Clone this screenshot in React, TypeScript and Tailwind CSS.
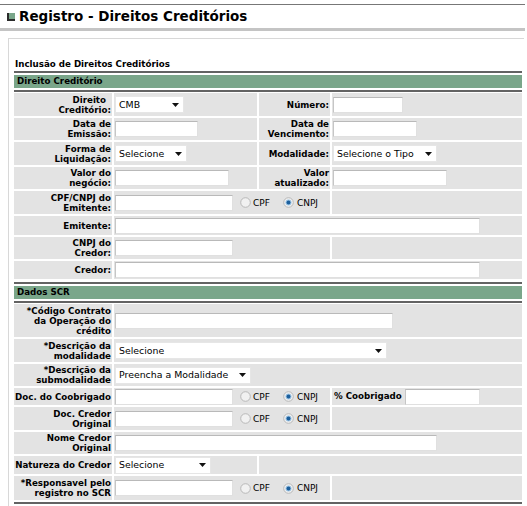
import type { ReactNode } from 'react';

const cell = 'bg-[#e3e3e3] flex items-center';

function Label({ lines, first }: { lines: string[]; first?: string }) {
  return (
    <div className={`${cell} justify-end pr-[1px] text-right text-[8.7px] font-bold leading-[10px]`}>
      <div>
        {lines.map((l, i) => (
          <div key={i} className={i === 0 && first ? first : ''}>
            {l}
          </div>
        ))}
      </div>
    </div>
  );
}

function Input({ w }: { w: string }) {
  return (
    <div
      className={`${w} h-[16px] shrink-0 border border-[#e0e0e0] border-t-[#b9b9b9] border-l-[#c6c6c6] bg-white`}
    />
  );
}

function Select({ w, text }: { w: string; text: string }) {
  return (
    <div
      className={`${w} flex h-[17px] shrink-0 items-center justify-between border border-[#e6e6e6] bg-white pl-[3px] pr-[4px] text-[9.4px] leading-[12px]`}
    >
      <span>{text}</span>
      <svg width="7" height="4" viewBox="0 0 7 4">
        <path d="M0 0H7L3.5 4Z" fill="#111" />
      </svg>
    </div>
  );
}

function Radio({ checked }: { checked?: boolean }) {
  return (
    <svg width="11" height="11" viewBox="0 0 11 11" className="shrink-0">
      <circle cx="5.5" cy="5.5" r="4.8" fill="#f1f1f1" stroke="#b8b8b8" strokeWidth="1" />
      {checked && <circle cx="5.5" cy="5.5" r="3" fill="#9cc3e3" />}
      {checked && <circle cx="5.5" cy="5.5" r="2" fill="#1c5f9c" />}
    </svg>
  );
}

function DocInput() {
  return (
    <div className="flex items-center text-[9px] leading-[12px]">
      <Input w="w-[118px]" />
      <div className="ml-[7px] flex items-center gap-[2px]">
        <Radio />
        <span>CPF</span>
      </div>
      <div className="ml-[13px] flex items-center gap-[3px]">
        <Radio checked />
        <span>CNPJ</span>
      </div>
    </div>
  );
}

function Field({ span, children }: { span?: string; children?: ReactNode }) {
  return <div className={`${cell} pl-[1px] ${span ?? ''}`}>{children}</div>;
}

function SectionHeader({ title, className }: { title: string; className?: string }) {
  return (
    <div className={className}>
      <div className="h-[2px] bg-[#636363]" />
      <div className="mt-[2px] h-[13px] bg-[#7aa68a] pl-[3px] text-[8.7px] font-bold leading-[13px]">
        {title}
      </div>
      <div className="mt-[2px] h-[2px] bg-[#636363]" />
    </div>
  );
}

export default function App() {
  return (
    <div className="h-[506px] w-[527px] overflow-hidden bg-white pt-[4px] font-['DejaVu_Sans',sans-serif] text-black">
      <div className="h-px w-[525px] bg-[#777]" />
      <div className="flex h-[23px] items-center gap-[4px] pl-[7px]">
        <span className="mt-[1px] h-[8px] w-[8px] border-b-2 border-l-2 border-[#2a2a2a] bg-[#7aa68a]" />
        <h1 className="text-[13.5px] font-bold leading-none">Registro - Direitos Creditórios</h1>
      </div>
      <div className="h-[3px] w-[525px] bg-[#c4c4c4]" />

      <div className="ml-[8px] mt-[7px] h-[500px] w-[516px] border-l border-t border-[#d8d8d8] pl-[5px] pr-[2px] pt-[20px]">
        <div className="pl-[1px] text-[8.7px] font-bold leading-[11px]">Inclusão de Direitos Creditórios</div>

        <SectionHeader title="Direito Creditório" className="mt-[1px]" />
        <div className="mt-[1px] grid grid-cols-[98px_143px_71px_190px] grid-rows-[23px_22px_23px_22px_23px_19px_22px_18px] gap-[2px]">
          <Label lines={['Direito', 'Creditório:']} first="pr-[5px]" />
          <Field>
            <Select w="w-[69px]" text="CMB" />
          </Field>
          <Label lines={['Número:']} />
          <Field>
            <Input w="w-[70px]" />
          </Field>

          <Label lines={['Data de', 'Emissão:']} />
          <Field>
            <Input w="w-[83px]" />
          </Field>
          <Label lines={['Data de', 'Vencimento:']} />
          <Field>
            <Input w="w-[84px]" />
          </Field>

          <Label lines={['Forma de', 'Liquidação:']} />
          <Field>
            <Select w="w-[72px]" text="Selecione" />
          </Field>
          <Label lines={['Modalidade:']} />
          <Field>
            <Select w="w-[104px]" text="Selecione o Tipo" />
          </Field>

          <Label lines={['Valor do', 'negócio:']} />
          <Field>
            <Input w="w-[114px]" />
          </Field>
          <Label lines={['Valor', 'atualizado:']} />
          <Field>
            <Input w="w-[114px]" />
          </Field>

          <Label lines={['CPF/CNPJ do', 'Emitente:']} />
          <Field span="col-span-2">
            <DocInput />
          </Field>
          <Field />

          <Label lines={['Emitente:']} />
          <Field span="col-span-3">
            <Input w="w-[365px]" />
          </Field>

          <Label lines={['CNPJ do', 'Credor:']} />
          <Field span="col-span-2">
            <Input w="w-[118px]" />
          </Field>
          <Field />

          <Label lines={['Credor:']} />
          <Field span="col-span-3">
            <Input w="w-[365px]" />
          </Field>
        </div>

        <SectionHeader title="Dados SCR" className="mt-[3px]" />
        <div className="mt-[1px] grid grid-cols-[98px_143px_71px_190px] grid-rows-[33px_23px_22px_17px_23px_22px_18px_24px] gap-[2px]">
          <Label lines={['*Código Contrato', 'da Operação do', 'crédito']} />
          <Field span="col-span-3">
            <Input w="w-[278px]" />
          </Field>

          <Label lines={['*Descrição da', 'modalidade']} />
          <Field span="col-span-3">
            <Select w="w-[272px]" text="Selecione" />
          </Field>

          <Label lines={['*Descrição da', 'submodalidade']} />
          <Field span="col-span-3">
            <Select w="w-[136px]" text="Preencha a Modalidade" />
          </Field>

          <Label lines={['Doc. do Coobrigado']} />
          <Field span="col-span-2">
            <DocInput />
          </Field>
          <div className={`${cell} gap-[3px] pl-[2px] text-[8.7px] font-bold`}>
            <span>% Coobrigado</span>
            <Input w="w-[75px]" />
          </div>

          <Label lines={['Doc. Credor', 'Original']} />
          <Field span="col-span-2">
            <DocInput />
          </Field>
          <Field />

          <Label lines={['Nome Credor', 'Original']} />
          <Field span="col-span-3">
            <Input w="w-[322px]" />
          </Field>

          <Label lines={['Natureza do Credor']} />
          <Field>
            <Select w="w-[96px]" text="Selecione" />
          </Field>
          <Field span="col-span-2" />

          <Label lines={['*Responsavel pelo', 'registro no SCR']} />
          <Field span="col-span-2">
            <DocInput />
          </Field>
          <Field />
        </div>
        <div className="mt-[2px] h-[2px] bg-[#636363]" />
      </div>
    </div>
  );
}
